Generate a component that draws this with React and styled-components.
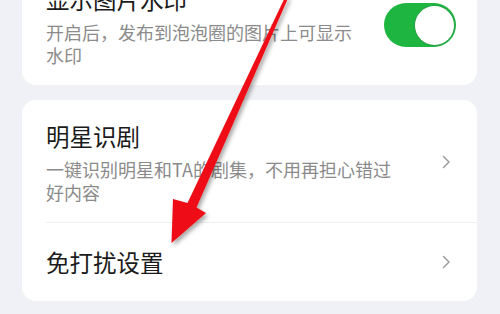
import React from "react";
import styled, { createGlobalStyle } from "styled-components";

const GlobalStyle = createGlobalStyle`
  html, body {
    margin: 0;
    padding: 0;
    background: #eff1f6;
    overflow: hidden;
  }
  body {
    font-family: "Noto Sans CJK SC", "Noto Sans", sans-serif;
  }
`;

const Page = styled.div`
  position: relative;
  width: 500px;
  height: 314px;
  overflow: hidden;
`;

const List = styled.div`
  display: flex;
  flex-direction: column;
  gap: 15px;
  padding: 0 23px 0 22px;
  margin-top: -37px;
`;

const Card = styled.div`
  background: #ffffff;
  border-radius: 14px;
  overflow: hidden;
`;

const Row = styled.div`
  display: flex;
  align-items: center;
  min-height: ${(p) => p.$minHeight || 0}px;
  padding: ${(p) => (p.$simple ? "0" : "20px")} 21px ${(p) => (p.$simple ? "0" : "18px")} 24px;
  box-sizing: border-box;
`;

const Divider = styled.div`
  height: 1px;
  background: #efeff1;
  margin-left: 24px;
`;

const TextBlock = styled.div`
  flex: 1;
  min-width: 0;
  margin-right: ${(p) => p.$reserve}px;
`;

const Title = styled.div`
  font-size: 23.5px;
  line-height: 32px;
  color: #1b1b1b;
`;

const Desc = styled.div`
  margin-top: 6px;
  font-size: 18px;
  line-height: 23px;
  color: #8b8b8b;
`;

const Switch = styled.div`
  display: flex;
  align-items: center;
  justify-content: flex-end;
  width: 72px;
  height: 44px;
  padding: 0 2px;
  box-sizing: border-box;
  border-radius: 22px;
  background: #1eb540;
`;

const Knob = styled.div`
  width: 39px;
  height: 39px;
  border-radius: 50%;
  background: #ffffff;
  box-shadow: 0 0 0 1px #2aa146;
`;

const Chevron = styled.svg`
  width: 9px;
  height: 14px;
  margin-right: 5px;
  flex-shrink: 0;
`;

const Overlay = styled.svg`
  position: absolute;
  left: 0;
  top: 0;
  pointer-events: none;
`;

const ChevronIcon = () => (
  <Chevron viewBox="0 0 9 14">
    <polyline points="1.5,1.5 7,7 1.5,12.5" fill="none" stroke="#9d9d9d" strokeWidth="1.5" strokeLinecap="round" strokeLinejoin="round" />
  </Chevron>
);

export default function App() {
  return (
    <Page>
      <GlobalStyle />
      <List>
        <Card>
          <Row>
            <TextBlock $reserve={20}>
              <Title>显示图片水印</Title>
              <Desc>开启后，发布到泡泡圈的图片上可显示水印</Desc>
            </TextBlock>
            <Switch>
              <Knob />
            </Switch>
          </Row>
        </Card>
        <Card>
          <Row>
            <TextBlock $reserve={40}>
              <Title>明星识剧</Title>
              <Desc>一键识别明星和TA的剧集，不用再担心错过好内容</Desc>
            </TextBlock>
            <ChevronIcon />
          </Row>
          <Divider />
          <Row $simple $minHeight={78}>
            <TextBlock $reserve={40}>
              <Title>免打扰设置</Title>
            </TextBlock>
            <ChevronIcon />
          </Row>
        </Card>
      </List>
      <Overlay width="500" height="314" viewBox="0 0 500 314">
        <defs>
          <filter id="shadow" x="-20%" y="-20%" width="140%" height="140%">
            <feDropShadow dx="2" dy="3" stdDeviation="2" floodColor="#000" floodOpacity="0.35" />
          </filter>
        </defs>
        <polygon
          points="285.6,-4 288.6,-3 196.5,207.5 206,213 171.5,243 173,199 187.5,203"
          fill="#ee1014"
          filter="url(#shadow)"
        />
      </Overlay>
    </Page>
  );
}
